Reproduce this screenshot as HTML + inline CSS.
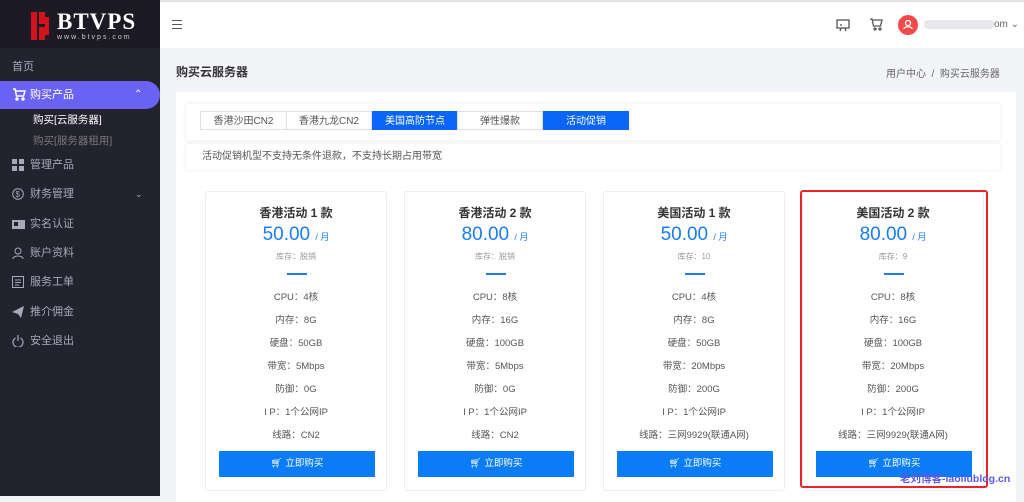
<!DOCTYPE html>
<html><head><meta charset="utf-8"><style>
*{margin:0;padding:0;box-sizing:border-box}
body{width:1024px;height:496px;overflow:hidden;font-family:"Liberation Sans","Noto Sans CJK SC",sans-serif;background:#f3f4f8;position:relative;font-size:12px;color:#555}
.sb{position:absolute;left:0;top:0;width:160px;height:496px;background:#23222f}
.logo{height:48px;background:#1b1a25;position:relative}
.logo .b{position:absolute;left:31px;top:12px;width:20px;height:28px}
.logo .t{position:absolute;left:57px;top:9px;color:#fff;font-family:"Liberation Serif",serif;font-size:23px;font-weight:bold;letter-spacing:1px}
.logo .u{position:absolute;left:57px;top:34px;color:#ccc;font-size:7px;letter-spacing:2px}
.it{position:absolute;left:0;width:160px;color:#a8a8b8;font-size:11px;height:20px;line-height:20px}
.it svg{position:absolute;left:12px;top:4px}
.it span{position:absolute;left:30px}
.act{background:#6a62f4;color:#fff;border-radius:0 14px 14px 0;height:28px;line-height:28px;top:81px}
.act svg{top:7px}
.top{position:absolute;left:160px;top:0;right:0;height:48px;background:#fff;border-top:2px solid #e4e4e4}
.panel{position:absolute;left:176px;top:92px;width:840px;height:410px;background:#fff}
.tabs{position:absolute;left:186px;top:104px;width:814px;height:36px;background:#fff;box-shadow:0 0 4px #e6e8ee}
.tab{position:absolute;top:7px;height:19px;line-height:19px;text-align:center;font-size:10px;border:1px solid #dde0e8;color:#555;background:#fff}
.tab.on{background:#0a64f5;color:#fff;border-color:#0a64f5}
.note{position:absolute;left:186px;top:144px;width:814px;height:26px;line-height:26px;padding-left:16px;background:#fff;box-shadow:0 0 4px #e6e8ee;font-size:10px;color:#555}
.card{position:absolute;top:191px;width:182px;height:300px;background:#fff;border:1px solid #eceef2;border-radius:3px;text-align:center}
.card h3{position:absolute;top:12px;width:100%;font-size:12px;color:#333;font-weight:bold}
.pr{position:absolute;top:32px;width:100%;color:#1a7cf5;font-size:19px}
.pr small{font-size:9px}
.st{position:absolute;top:59px;width:100%;font-size:8px;color:#999}
.ln{position:absolute;top:81px;left:81px;width:20px;height:2px;background:#1a7cf5}
.r{position:absolute;width:100%;font-size:9.5px;color:#555}
.btn{position:absolute;left:13px;top:259px;width:156px;height:26px;background:#0a7cf5;color:#fff;font-size:9.5px;line-height:26px}
.red{position:absolute;left:800px;top:190px;width:188px;height:298px;border:2px solid #e8262a;border-radius:3px}
</style></head><body>
<div class="sb">
<div class="logo"><svg class="b" viewBox="0 0 20 28"><rect x="0" y="0" width="6" height="28" fill="#d3131b"/><rect x="8" y="0" width="6" height="12" fill="#d3131b"/><rect x="8" y="15" width="6" height="13" fill="#d3131b"/><rect x="14" y="5" width="4" height="18" fill="#d3131b"/></svg><div class="t">BTVPS</div><div class="u">www.btvps.com</div></div>
<div class="it" style="top:57px"><span style="left:12px">首页</span></div>
<div class="it act"><svg width="14" height="13" viewBox="0 0 14 13" fill="none" stroke="#fff" stroke-width="1.5"><path d="M1 1h2l1.5 7h7l1.5-5H4"/><circle cx="5" cy="11" r="1"/><circle cx="11" cy="11" r="1"/></svg><span>购买产品</span><span style="left:134px;font-size:10px">⌃</span></div>
<div class="it" style="top:110px;color:#fff"><span style="left:33px;font-size:10.5px">购买[云服务器]</span></div>
<div class="it" style="top:131px;color:#777"><span style="left:33px;font-size:10.5px">购买[服务器租用]</span></div>
<div class="it" style="top:155px"><svg width="12" height="12"><rect x="0" y="0" width="5" height="5" fill="#a8a8b8"/><rect x="7" y="0" width="5" height="5" fill="#a8a8b8"/><rect x="0" y="7" width="5" height="5" fill="#a8a8b8"/><rect x="7" y="7" width="5" height="5" fill="#a8a8b8"/></svg><span>管理产品</span></div>
<div class="it" style="top:184px"><svg width="12" height="12"><circle cx="6" cy="6" r="5.3" fill="none" stroke="#a8a8b8"/><text x="3.5" y="9" font-size="8" fill="#a8a8b8">$</text></svg><span>财务管理</span><span style="left:135px;font-size:9px">⌄</span></div>
<div class="it" style="top:214px"><svg width="13" height="12"><rect x="0" y="2" width="13" height="9" fill="#a8a8b8"/><rect x="2" y="4" width="4" height="4" fill="#23222f"/></svg><span>实名认证</span></div>
<div class="it" style="top:243px"><svg width="12" height="12" fill="none" stroke="#a8a8b8"><circle cx="6" cy="4" r="3"/><path d="M1 12c0-4 10-4 10 0"/></svg><span>账户资料</span></div>
<div class="it" style="top:272px"><svg width="12" height="12" fill="none" stroke="#a8a8b8"><rect x="0.5" y="0.5" width="11" height="11"/><path d="M3 4h6M3 6.5h6M3 9h4"/></svg><span>服务工单</span></div>
<div class="it" style="top:302px"><svg width="12" height="12"><path d="M0 6L12 0 9 12 6 8z" fill="#a8a8b8"/></svg><span>推介佣金</span></div>
<div class="it" style="top:331px"><svg width="12" height="12" fill="none" stroke="#a8a8b8" stroke-width="1.2"><path d="M3.5 3a5 5 0 1 0 5 0M6 0v6"/></svg><span>安全退出</span></div>
</div>
<div class="top">
<div style="position:absolute;left:12px;top:18px;width:10px;height:9px;border-top:1.5px solid #555;border-bottom:1.5px solid #555"><div style="margin-top:2.5px;height:1.5px;background:#555"></div></div>
<svg style="position:absolute;left:676px;top:17px" width="14" height="13" fill="none" stroke="#555" stroke-width="1.3"><rect x="1" y="1" width="12" height="8"/><path d="M4 12l1-3M10 12l-1-3M4 6h2"/></svg>
<svg style="position:absolute;left:710px;top:16px" width="14" height="13" fill="none" stroke="#555" stroke-width="1.3"><path d="M0 1h2l1.5 7h7l1.5-6H3"/><circle cx="5" cy="11" r="1"/><circle cx="10" cy="11" r="1"/></svg>
<div style="position:absolute;left:738px;top:13px;width:20px;height:20px;border-radius:50%;background:#f24a4a"><svg width="20" height="20" fill="none" stroke="#fff" stroke-width="1.3"><circle cx="10" cy="8" r="2.5"/><path d="M6 14c0-3 8-3 8 0"/></svg></div>
<div style="position:absolute;left:764px;top:18px;width:70px;height:9px;background:#e8e8ec;border-radius:4px"></div>
<div style="position:absolute;left:834px;top:17px;font-size:10px;color:#666">om ⌄</div>
</div>
<div style="position:absolute;left:176px;top:63px;font-size:12px;font-weight:bold;color:#333">购买云服务器</div>
<div style="position:absolute;left:886px;top:65px;font-size:10px;color:#666">用户中心 &nbsp;/&nbsp; 购买云服务器</div>
<div class="panel"></div>
<div class="tabs">
<div class="tab" style="left:14px;width:87px">香港沙田CN2</div>
<div class="tab" style="left:100px;width:86px">香港九龙CN2</div>
<div class="tab on" style="left:186px;width:86px">美国高防节点</div>
<div class="tab" style="left:271px;width:86px">弹性爆款</div>
<div class="tab on" style="left:357px;width:86px">活动促销</div>
</div>
<div class="note">活动促销机型不支持无条件退款，不支持长期占用带宽</div>

<div class="card" style="left:205px"><h3>香港活动 1 款</h3><div class="pr">50.00 <small>/ 月</small></div><div class="st">库存：脱销</div><div class="ln"></div>
<div class="r" style="top:97px">CPU：4核</div><div class="r" style="top:120px">内存：8G</div><div class="r" style="top:143px">硬盘：50GB</div><div class="r" style="top:166px">带宽：5Mbps</div><div class="r" style="top:189px">防御：0G</div><div class="r" style="top:212px">I P：1个公网IP</div><div class="r" style="top:235px">线路：CN2</div><div class="btn">🛒︎ 立即购买</div></div>
<div class="card" style="left:404px"><h3>香港活动 2 款</h3><div class="pr">80.00 <small>/ 月</small></div><div class="st">库存：脱销</div><div class="ln"></div>
<div class="r" style="top:97px">CPU：8核</div><div class="r" style="top:120px">内存：16G</div><div class="r" style="top:143px">硬盘：100GB</div><div class="r" style="top:166px">带宽：5Mbps</div><div class="r" style="top:189px">防御：0G</div><div class="r" style="top:212px">I P：1个公网IP</div><div class="r" style="top:235px">线路：CN2</div><div class="btn">🛒︎ 立即购买</div></div>
<div class="card" style="left:603px"><h3>美国活动 1 款</h3><div class="pr">50.00 <small>/ 月</small></div><div class="st">库存：10</div><div class="ln"></div>
<div class="r" style="top:97px">CPU：4核</div><div class="r" style="top:120px">内存：8G</div><div class="r" style="top:143px">硬盘：50GB</div><div class="r" style="top:166px">带宽：20Mbps</div><div class="r" style="top:189px">防御：200G</div><div class="r" style="top:212px">I P：1个公网IP</div><div class="r" style="top:235px">线路：三网9929(联通A网)</div><div class="btn">🛒︎ 立即购买</div></div>
<div class="card" style="left:802px"><h3>美国活动 2 款</h3><div class="pr">80.00 <small>/ 月</small></div><div class="st">库存：9</div><div class="ln"></div>
<div class="r" style="top:97px">CPU：8核</div><div class="r" style="top:120px">内存：16G</div><div class="r" style="top:143px">硬盘：100GB</div><div class="r" style="top:166px">带宽：20Mbps</div><div class="r" style="top:189px">防御：200G</div><div class="r" style="top:212px">I P：1个公网IP</div><div class="r" style="top:235px">线路：三网9929(联通A网)</div><div class="btn">🛒︎ 立即购买</div></div>
<div class="red"></div>
<div style="position:absolute;left:900px;top:471px;font-size:10.5px;color:#5b57e8;font-weight:bold;white-space:nowrap">老刘博客-laoliublog.cn</div>
</body></html>
